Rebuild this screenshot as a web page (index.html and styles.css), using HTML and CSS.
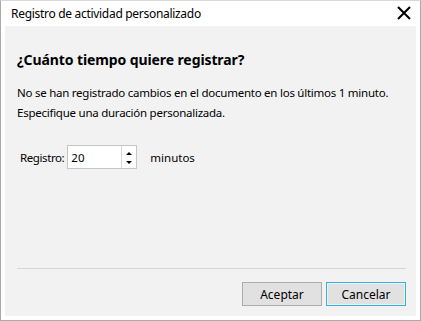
FILE: index.html
```html
<!DOCTYPE html>
<html lang="es">
<head>
    <meta charset="UTF-8">
    <title>Registro de actividad personalizado</title>
    <link rel="stylesheet" href="styles.css">
</head>
<body>
    <div class="dialog">
        <div class="titlebar">
            <span class="title">Registro de actividad personalizado</span>
            <svg class="close" width="14" height="14" viewBox="0 0 14 14">
                <path d="M1 1 L13 13 M13 1 L1 13" stroke="#000" stroke-width="2" fill="none"/>
            </svg>
        </div>
        <div class="content">
            <h1>¿Cuánto tiempo quiere registrar?</h1>
            <p>No se han registrado cambios en el documento en los últimos 1 minuto.<br>
            Especifique una duración personalizada.</p>

            <div class="field-row">
                <label for="registro">Registro:</label>
                <div class="spinbox">
                    <input type="text" id="registro" value="20">
                    <div class="spin-buttons">
                        <span class="arrow up"></span>
                        <span class="arrow down"></span>
                    </div>
                </div>
                <span class="unit">minutos</span>
            </div>

            <div class="footer">
                <button type="button" class="btn">Aceptar</button>
                <button type="button" class="btn focused">Cancelar</button>
            </div>
        </div>
    </div>
</body>
</html>
```

FILE: styles.css
```css
/* Page */
body {
    margin: 0;
    font-family: "Noto Sans", "Open Sans", sans-serif;
    font-size: 11.5px;
    color: #000;
}

/* Window frame */
.dialog {
    width: 421px;
    height: 321px;
    box-sizing: border-box;
    border: 1px solid #a9a9a9;
    border-top-color: #d9d9d9;
    background-color: #fff;
    padding: 0 4px 4px 4px;
    display: flex;
    flex-direction: column;
}

/* Title bar */
.titlebar {
    height: 25px;
    display: flex;
    align-items: center;
    justify-content: space-between;
    padding: 0 5px 0 6px;
    flex-shrink: 0;
}

.title {
    font-size: 12px;
    letter-spacing: -0.3px;
}

.close {
    margin-top: -2px;
}

/* Body area */
.content {
    flex: 1;
    background-color: #f2f2f2;
    padding: 0 10px 0 12px;
    display: flex;
    flex-direction: column;
}

h1 {
    font-size: 14px;
    font-weight: bold;
    margin: 24px 0 0 0;
    letter-spacing: -0.1px;
}

p {
    margin: 14px 0 0 0;
    line-height: 20px;
    letter-spacing: -0.25px;
    white-space: nowrap;
}

/* Spin field */
.field-row {
    display: flex;
    align-items: center;
    margin-top: 22px;
    padding-left: 3px;
}

.field-row label {
    margin-right: 3px;
    letter-spacing: -0.4px;
}

.spinbox {
    display: flex;
    width: 70px;
    height: 24px;
    box-sizing: border-box;
    border: 1px solid #c6c6c6;
    background-color: #fff;
}

.spinbox input {
    width: 50px;
    border: none;
    outline: none;
    padding: 0 0 0 3px;
    font-family: inherit;
    font-size: 11.5px;
    background: transparent;
}

.spin-buttons {
    width: 18px;
    border-left: 1px solid #d9d9d9;
    display: flex;
    flex-direction: column;
    align-items: center;
    justify-content: space-between;
    padding: 6px 0 4px 0;
}

.arrow {
    width: 0;
    height: 0;
    border-left: 3px solid transparent;
    border-right: 3px solid transparent;
}

.arrow.up {
    border-bottom: 3px solid #000;
}

.arrow.down {
    border-top: 3px solid #000;
}

.unit {
    margin-left: 13px;
}

/* Footer buttons */
.footer {
    margin-top: auto;
    margin-bottom: 10px;
    border-top: 1px solid #d6d6d6;
    padding-top: 13px;
    display: flex;
    justify-content: flex-end;
    gap: 4px;
}

.btn {
    width: 80px;
    height: 24px;
    background-color: #e1e1e1;
    border: 1px solid #adadad;
    font-family: inherit;
    font-size: 12px;
    padding: 0;
    color: #000;
}

.btn.focused {
    border-color: #3eadd9;
    box-shadow: inset 0 0 0 1px #e5f6fc;
}
```
